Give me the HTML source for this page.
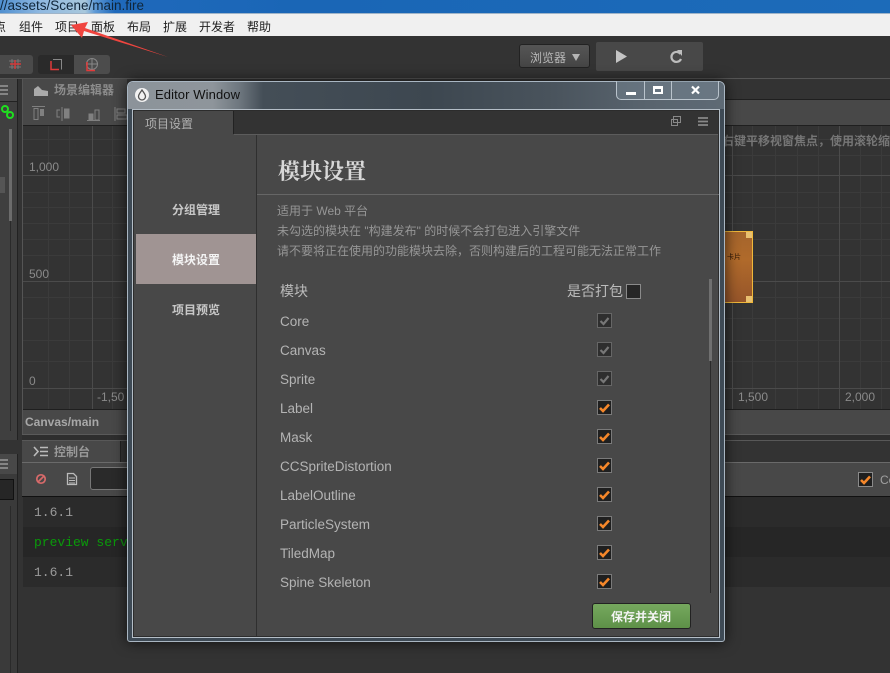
<!DOCTYPE html>
<html><head><meta charset="utf-8"><style>
html,body{margin:0;padding:0;width:890px;height:673px;overflow:hidden;background:#333}
body{position:relative;font-family:"Liberation Sans","Noto Sans CJK SC",sans-serif}
.a{position:absolute}
.t{position:absolute;white-space:nowrap;line-height:1}
.lbl{position:absolute;left:280px;font-size:13.5px;color:#b4b4b4;line-height:16px;white-space:nowrap}
.cb{position:absolute;left:597px;width:13px;height:13px;background:#1f1f1f;border:1px solid #7a7a7a}
.cb svg{position:absolute;left:0;top:0}
.m{position:absolute;top:19px;font-size:12px;color:#222;line-height:16px;white-space:nowrap}
.tick{position:absolute;color:#8a8a8a;font-size:12px;line-height:14px}
</style></head><body>
<!-- title bar -->
<div class="a" style="left:0;top:0;width:890px;height:14px;background:linear-gradient(90deg,#4f8fd0 0,#8fb8e0 40px,#a9c8dc 85px,#5f9ad6 95px,#1f69bb 115px,#1a66b6 300px,#1c6bb9 100%)"></div>
<div class="a" style="left:0;top:13px;width:890px;height:1px;background:#9fb4c8"></div>
<div class="t" style="left:0;top:-2px;font-size:13.500px;color:#10263a;line-height:15px">//assets/Scene/main.fire</div>
<!-- menu bar -->
<div class="a" style="left:0;top:14px;width:890px;height:22px;background:#f0f0f0"></div>
<div class="m" style="left:-6px">点</div><div class="m" style="left:19px">组件</div><div class="m" style="left:55px">项目</div><div class="m" style="left:91px">面板</div><div class="m" style="left:127px">布局</div><div class="m" style="left:163px">扩展</div><div class="m" style="left:199px">开发者</div><div class="m" style="left:247px">帮助</div>
<!-- toolbar -->
<div class="a" style="left:0;top:36px;width:890px;height:42px;background:#333"></div>
<svg class="a" style="left:0;top:0" width="200" height="70"><polygon points="71,25 88,22 85,28 168,57 84,31 82,38" fill="#f0453f"/></svg>
<div class="a" style="left:-8px;top:55px;width:41px;height:19px;background:#4a4a4a;border-radius:3px"></div>
<div class="a" style="left:38px;top:55px;width:36px;height:19px;background:#2a2a2a;border-radius:3px 0 0 3px"></div>
<div class="a" style="left:74px;top:55px;width:36px;height:19px;background:#4c4c4c;border-radius:0 3px 3px 0"></div>
<svg class="a" style="left:0;top:55px" width="112" height="20">
<path d="M9 6h12M9 12h12M12 4v10M18 4v10" stroke="#777" fill="none"/><path d="M10 9h11M15 5v9" stroke="#d23a3a" stroke-width="1.500" fill="none"/>
<path d="M53 4.500h8.500v10" stroke="#888" fill="none"/><path d="M51 6v8.500h8" stroke="#e03a3a" stroke-width="1.500" fill="none"/>
<circle cx="92" cy="9" r="5.500" fill="none" stroke="#888"/><path d="M86 9h12M92 3.500v11" stroke="#888" fill="none"/><path d="M87 7v8.500h8" stroke="#e03a3a" stroke-width="1.500" fill="none"/></svg>
<div class="a" style="left:519px;top:44px;width:71px;height:24px;box-sizing:border-box;background:linear-gradient(#555,#454545);border:1px solid #222;border-radius:3px"></div>
<div class="t" style="left:530px;top:52px;font-size:12px;color:#b8b8b8">浏览器</div>
<svg class="a" style="left:571px;top:53px" width="10" height="9"><polygon points="1,1 9,1 5,8" fill="#b5b5b5"/></svg>
<div class="a" style="left:596px;top:42px;width:107px;height:29px;background:#484848;border-radius:2px"></div>
<svg class="a" style="left:612px;top:46px" width="20" height="22"><polygon points="4,4 15,10.500 4,17" fill="#c4c4c4"/></svg>
<svg class="a" style="left:666px;top:47px" width="20" height="20"><path d="M14.500 7A5 5 0 1 0 15 12" fill="none" stroke="#bdbdbd" stroke-width="2.200"/><polygon points="11,3 16,3 16,9" fill="#bdbdbd"/></svg>
<div class="a" style="left:0;top:78px;width:890px;height:1px;background:#555"></div>
<!-- left column -->
<div class="a" style="left:0;top:79px;width:17px;height:361px;background:#3f3f3f;border-right:1px solid #222"></div>
<div class="a" style="left:0;top:79px;width:17px;height:22px;background:#484848;border-bottom:1px solid #222"></div>
<svg class="a" style="left:0;top:84px" width="10" height="12"><path d="M0 2h8M0 6h8M0 10h8" stroke="#999" stroke-width="1.600"/></svg>
<svg class="a" style="left:0;top:104px" width="16" height="18"><circle cx="5" cy="5" r="3" fill="none" stroke="#1fe01f" stroke-width="2"/><circle cx="10" cy="11" r="3" fill="none" stroke="#1fe01f" stroke-width="2"/></svg>
<div class="a" style="left:9px;top:129px;width:3px;height:92px;background:#6c6c6c"></div>
<div class="a" style="left:10px;top:221px;width:1px;height:210px;background:#2a2a2a"></div>
<div class="a" style="left:0;top:177px;width:5px;height:16px;background:#555"></div>
<div class="a" style="left:0;top:454px;width:17px;height:219px;background:#3a3a3a;border-right:1px solid #222"></div>
<div class="a" style="left:0;top:454px;width:17px;height:20px;background:#484848"></div>
<svg class="a" style="left:0;top:458px" width="10" height="12"><path d="M0 2h8M0 6h8M0 10h8" stroke="#999" stroke-width="1.600"/></svg>
<div class="a" style="left:0;top:479px;width:13px;height:19px;background:#262626;border:1px solid #111;border-left:0"></div>
<div class="a" style="left:10px;top:506px;width:1px;height:167px;background:#2a2a2a"></div>
<!-- scene panel -->
<div class="a" style="left:22px;top:79px;width:868px;height:361px;background:#333;border-left:1px solid #555"></div>
<div class="a" style="left:23px;top:79px;width:104px;height:22px;background:#484848"></div>
<svg class="a" style="left:34px;top:84px" width="15" height="13"><polygon points="0,12 0,5 4,2 8,6 14,7 14,12" fill="#aaa"/></svg>
<div class="t" style="left:54px;top:84px;font-size:12px;font-weight:bold;color:#8c8c8c">场景编辑器</div>
<div class="a" style="left:23px;top:99px;width:867px;height:1px;background:#1f1f1f"></div>
<div class="a" style="left:23px;top:100px;width:867px;height:25px;background:#484848;border-bottom:1px solid #1f1f1f"></div>
<div class="a" style="left:23px;top:99px;width:104px;height:1px;background:#484848"></div>
<svg class="a" style="left:30px;top:106px" width="98" height="16"><g fill="none" stroke="#808080"><path d="M2 .5h13M4 2.500h4v11h-4z"/><path d="M32 1v14M30 4h-3v7h3M34 3h5v9h-5"/><path d="M57 14.500h13M59 8h4v6h-4zM65 4h4v10h-4z"/><path d="M85 1v14M87 3h8v4h-8zM87 9h10v4h-10z"/></g><rect x="10" y="3" width="4" height="7" fill="#808080"/><rect x="34" y="3" width="5" height="9" fill="#808080"/><rect x="59" y="8" width="4" height="6" fill="#808080"/></svg>
<!-- grid -->
<div class="a" style="left:23px;top:126px;width:867px;height:283px;background:#333"></div>
<svg class="a" style="left:23px;top:126px" width="867" height="283">
<g stroke="#3b3b3b"><path d="M25.500 0v283M46.500 0v283M89.500 0v283M110.500 0v283M132.500 0v283M729.500 0v283M752.500 0v283M774.500 0v283M795.500 0v283M837.500 0v283M858.500 0v283"/><path d="M0 13.500h867M0 29.500h867M0 66.500h867M0 81.500h867M0 97.500h867M0 113.500h867M0 129.500h867M0 171.500h867M0 192.500h867M0 214.500h867M0 235.500h867"/></g>
<g stroke="#4b4b4b"><path d="M69.500 0v283M709.500 0v283M816.500 0v283M0 49.500h867M0 155.500h867M0 262.500h867"/></g>
</svg>
<div class="tick" style="left:29px;top:160px">1,000</div>
<div class="tick" style="left:29px;top:267px">500</div>
<div class="tick" style="left:29px;top:374px">0</div>
<div class="tick" style="left:97px;top:390px">-1,50</div>
<div class="tick" style="left:738px;top:390px">1,500</div>
<div class="tick" style="left:845px;top:390px">2,000</div>
<div class="t" style="left:722px;top:135px;font-size:12px;font-weight:bold;color:#767676">右键平移视窗焦点，使用滚轮缩</div>
<!-- sprite -->
<div class="a" style="left:715px;top:231px;width:38px;height:72px;box-sizing:border-box;background:linear-gradient(#a5652c,#b06a2b 40%,#96552a);border:1px solid #f0b83a"></div>
<div class="a" style="left:746px;top:232px;width:6px;height:6px;background:#e8c070"></div>
<div class="a" style="left:746px;top:296px;width:6px;height:6px;background:#e8c070"></div>
<div class="t" style="left:727px;top:254px;font-size:7px;color:#2a1505">卡片</div>
<div class="a" style="left:23px;top:409px;width:867px;height:1px;background:#1f1f1f"></div>
<div class="a" style="left:23px;top:410px;width:867px;height:24px;background:#484848"></div>
<div class="t" style="left:25px;top:416px;font-size:12px;font-weight:bold;color:#a8a8a8">Canvas/main</div>
<div class="a" style="left:22px;top:434px;width:868px;height:6px;background:#2e2e2e;border-top:1px solid #5a5a5a;box-sizing:border-box"></div>
<!-- console -->
<div class="a" style="left:22px;top:440px;width:868px;height:233px;background:#333"></div>
<div class="a" style="left:22px;top:440px;width:868px;height:1px;background:#585858"></div>
<div class="a" style="left:22px;top:441px;width:98px;height:21px;background:#484848;border-right:1px solid #222"></div>
<svg class="a" style="left:33px;top:446px" width="16" height="12"><path d="M1 1l4 4.500-4 4.500" fill="none" stroke="#bbb" stroke-width="1.600"/><path d="M7 1.500h8M7 5.500h8M7 9.500h8" stroke="#bbb" stroke-width="1.600"/></svg>
<div class="t" style="left:54px;top:446px;font-size:12px;font-weight:bold;color:#999">控制台</div>
<div class="a" style="left:22px;top:462px;width:868px;height:34px;background:#484848;border-top:1px solid #6a6a6a;box-sizing:border-box"></div>
<svg class="a" style="left:34px;top:472px" width="16" height="16"><circle cx="7" cy="7" r="4.200" fill="none" stroke="#d86a6a" stroke-width="1.700"/><path d="M4 10l6-6" stroke="#d86a6a" stroke-width="1.700"/></svg>
<svg class="a" style="left:66px;top:472px" width="14" height="15"><path d="M1.500 1.500h6l3 3v8h-9z" fill="none" stroke="#bbb" stroke-width="1.300"/><path d="M3 6h6M3 8.500h6M3 11h6" stroke="#bbb"/></svg>
<div class="a" style="left:90px;top:467px;width:50px;height:23px;box-sizing:border-box;background:#2a2a2a;border:1px solid #777;border-radius:3px"></div>
<div class="a" style="left:22px;top:496px;width:868px;height:1px;background:#111"></div>
<div class="a" style="left:23px;top:497px;width:867px;height:30px;background:#2b2b2b"></div>
<div class="a" style="left:23px;top:527px;width:867px;height:30px;background:#262626"></div>
<div class="a" style="left:23px;top:557px;width:867px;height:30px;background:#2b2b2b"></div>
<div class="t" style="left:34px;top:505px;font:13px 'Liberation Mono',monospace;color:#9a9a9a">1.6.1</div>
<div class="t" style="left:34px;top:535px;font:13px 'Liberation Mono',monospace;color:#0a9a0a">preview serv</div>
<div class="t" style="left:34px;top:565px;font:13px 'Liberation Mono',monospace;color:#9a9a9a">1.6.1</div>
<div class="a" style="left:858px;top:472px;width:13px;height:13px;background:#1f1f1f;border:1px solid #8a8a8a"><svg width="13" height="13" style="position:absolute;left:0;top:0"><path d="M2 7l3 3 6-6.500" fill="none" stroke="#f5872a" stroke-width="2.600"/></svg></div>
<div class="t" style="left:880px;top:474px;font-size:12px;color:#a0a0a0">Co</div>
<!-- window -->
<div class="a" style="left:127px;top:81px;width:598px;height:561px;box-sizing:border-box;border-radius:6px 6px 3px 3px;box-shadow:0 0 14px rgba(0,0,0,.7);background:#3e4a55;border:1px solid #a9b6c2"></div>
<div class="a" style="left:128px;top:82px;width:596px;height:27px;border-radius:5px 5px 0 0;background:linear-gradient(90deg,#8c939a 0,#8e959b 85px,#6d767e 112px,#444e57 135px,#3d4750 300px,#49535c 420px,#59646e 520px,#5e6a75 100%)"></div>
<svg class="a" style="left:134px;top:87px" width="16" height="16"><circle cx="8" cy="8" r="7" fill="#f2f2f2"/><path d="M8 3c2 3 3.500 4.500 3.500 6.500a3.500 3.500 0 0 1-7 0C4.500 7.500 6 6 8 3z" fill="none" stroke="#555" stroke-width="1.300"/></svg>
<div class="t" style="left:155px;top:88px;font-size:13px;color:#111;letter-spacing:.1px">Editor Window</div>
<div class="a" style="left:616px;top:81px;width:103px;height:19px;box-sizing:border-box;background:rgba(120,135,148,.45);border:1px solid #b9c3cc;border-top:0;border-radius:0 0 5px 5px"></div>
<div class="a" style="left:644px;top:81px;width:1px;height:18px;background:#b9c3cc"></div>
<div class="a" style="left:671px;top:81px;width:1px;height:18px;background:#b9c3cc"></div>
<div class="a" style="left:626px;top:92px;width:10px;height:3px;background:#fff"></div>
<div class="a" style="left:653px;top:86px;width:10px;height:8px;box-sizing:border-box;border:2px solid #fff;border-top-width:3px"></div>
<svg class="a" style="left:690px;top:85px" width="12" height="11"><path d="M2 1.500l7 7M9 1.500l-7 7" stroke="#fff" stroke-width="2.200"/></svg>
<!-- window inner -->
<div class="a" style="left:132px;top:109px;width:588px;height:529px;box-sizing:border-box;border:1px solid #b4bec7;background:#484848"></div>
<div class="a" style="left:133px;top:110px;width:586px;height:527px;box-sizing:border-box;border:1px solid #2c2c2c;pointer-events:none"></div>
<div class="a" style="left:134px;top:111px;width:584px;height:23px;background:#333"></div>
<div class="a" style="left:134px;top:111px;width:99px;height:24px;background:#484848"></div>
<div class="a" style="left:233px;top:111px;width:1px;height:23px;background:#222"></div>
<div class="a" style="left:234px;top:134px;width:484px;height:1px;background:#5c5c5c"></div>
<div class="t" style="left:145px;top:118px;font-size:12px;color:#b0b0b0">项目设置</div>
<svg class="a" style="left:670px;top:115px" width="12" height="12"><g fill="none" stroke="#888"><rect x="3.500" y="1.500" width="7" height="6"/><rect x="1.500" y="4.500" width="6" height="6"/></g></svg>
<svg class="a" style="left:697px;top:116px" width="12" height="11"><path d="M1 2h10M1 5.500h10M1 9h10" stroke="#888" stroke-width="1.800"/></svg>
<div class="a" style="left:256px;top:135px;width:1px;height:501px;background:#2f2f2f"></div>
<div class="a" style="left:136px;top:234px;width:120px;height:50px;background:#a09493"></div>
<div class="t" style="left:172px;top:204px;font-size:12px;font-weight:bold;color:#c8c8c8">分组管理</div>
<div class="t" style="left:172px;top:254px;font-size:12px;font-weight:bold;color:#f4f4f4">模块设置</div>
<div class="t" style="left:172px;top:304px;font-size:12px;font-weight:bold;color:#c8c8c8">项目预览</div>
<div class="t" style="left:278px;top:160px;font-size:22px;font-weight:700;color:#d8d8d8;font-family:'Noto Serif CJK SC','Noto Sans CJK SC',sans-serif;line-height:1">模块设置</div>
<div class="a" style="left:257px;top:194px;width:462px;height:1px;background:#666"></div>
<div class="t" style="left:277px;top:205px;font-size:12px;color:#969696">适用于 Web 平台</div>
<div class="t" style="left:277px;top:225px;font-size:12px;color:#969696">未勾选的模块在 "构建发布" 的时候不会打包进入引擎文件</div>
<div class="t" style="left:277px;top:245px;font-size:12px;color:#969696">请不要将正在使用的功能模块去除，否则构建后的工程可能无法正常工作</div>
<div class="t" style="left:280px;top:284px;font-size:14px;color:#bbb">模块</div>
<div class="t" style="left:567px;top:284px;font-size:14px;color:#bbb">是否打包</div>
<div class="a" style="left:626px;top:284px;width:13px;height:13px;background:#262626;border:1px solid #8a8a8a"></div>
<div class="a" style="left:709px;top:279px;width:3px;height:82px;background:#707070"></div>
<div class="a" style="left:710px;top:361px;width:1px;height:232px;background:#2a2a2a"></div>
<div class="lbl" style="top:314px">Core</div><div class="lbl" style="top:343px">Canvas</div><div class="lbl" style="top:372px">Sprite</div><div class="lbl" style="top:401px">Label</div><div class="lbl" style="top:430px">Mask</div><div class="lbl" style="top:459px">CCSpriteDistortion</div><div class="lbl" style="top:488px">LabelOutline</div><div class="lbl" style="top:517px">ParticleSystem</div><div class="lbl" style="top:546px">TiledMap</div><div class="lbl" style="top:575px">Spine Skeleton</div>
<div class="cb" style="top:313px;background:#2e2e2e;border-color:#666"><svg width="13" height="13"><path d="M2.500 7l3 3 5-6" fill="none" stroke="#777" stroke-width="2.200"/></svg></div>
<div class="cb" style="top:342px;background:#2e2e2e;border-color:#666"><svg width="13" height="13"><path d="M2.500 7l3 3 5-6" fill="none" stroke="#777" stroke-width="2.200"/></svg></div>
<div class="cb" style="top:371px;background:#2e2e2e;border-color:#666"><svg width="13" height="13"><path d="M2.500 7l3 3 5-6" fill="none" stroke="#777" stroke-width="2.200"/></svg></div>
<div class="cb" style="top:400px"><svg width="13" height="13"><path d="M2 7l3 3 6-6.500" fill="none" stroke="#f5872a" stroke-width="2.600"/></svg></div>
<div class="cb" style="top:429px"><svg width="13" height="13"><path d="M2 7l3 3 6-6.500" fill="none" stroke="#f5872a" stroke-width="2.600"/></svg></div>
<div class="cb" style="top:458px"><svg width="13" height="13"><path d="M2 7l3 3 6-6.500" fill="none" stroke="#f5872a" stroke-width="2.600"/></svg></div>
<div class="cb" style="top:487px"><svg width="13" height="13"><path d="M2 7l3 3 6-6.500" fill="none" stroke="#f5872a" stroke-width="2.600"/></svg></div>
<div class="cb" style="top:516px"><svg width="13" height="13"><path d="M2 7l3 3 6-6.500" fill="none" stroke="#f5872a" stroke-width="2.600"/></svg></div>
<div class="cb" style="top:545px"><svg width="13" height="13"><path d="M2 7l3 3 6-6.500" fill="none" stroke="#f5872a" stroke-width="2.600"/></svg></div>
<div class="cb" style="top:574px"><svg width="13" height="13"><path d="M2 7l3 3 6-6.500" fill="none" stroke="#f5872a" stroke-width="2.600"/></svg></div>
<div class="a" style="left:592px;top:603px;width:99px;height:26px;box-sizing:border-box;background:linear-gradient(#76a85e,#5e9148);border:1px solid #222;border-radius:3px"></div>
<div class="t" style="left:611px;top:611px;font-size:12px;font-weight:bold;color:#f4f4f4">保存并关闭</div>
</body></html>
